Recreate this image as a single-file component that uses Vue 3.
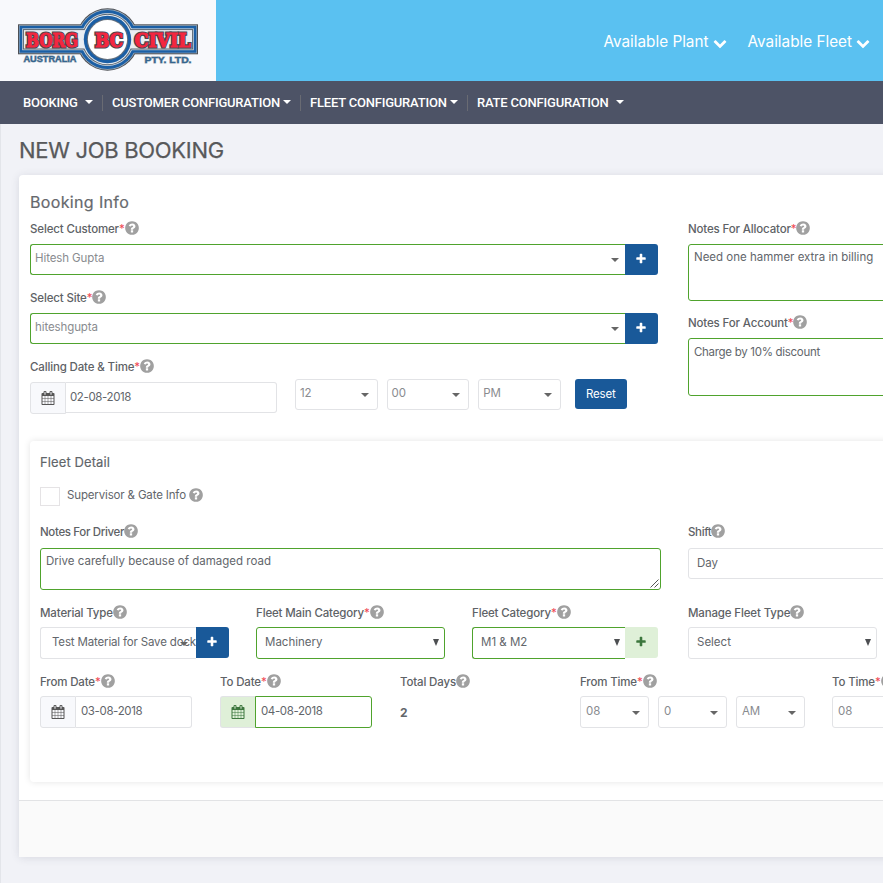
<script setup>
const menu = [
  { label: 'BOOKING', cls: 'm1' },
  { label: 'CUSTOMER CONFIGURATION', cls: 'm2' },
  { label: 'FLEET CONFIGURATION', cls: 'm3' },
  { label: 'RATE CONFIGURATION', cls: 'm4' },
]
const parties = [
  { label: 'Select Customer', value: 'Hitesh Gupta' },
  { label: 'Select Site', value: 'hiteshgupta' },
]
const callTime = ['12', '00', 'PM']
const fromTime = ['08', '0', 'AM']
</script>

<template>
  <div class="page">
    <svg class="defs" aria-hidden="true">
      <symbol id="plus" viewBox="0 0 1792 1792"><path d="M1600 736v192q0 40-28 68t-68 28h-416v416q0 40-28 68t-68 28h-192q-40 0-68-28t-28-68v-416h-416q-40 0-68-28t-28-68v-192q0-40 28-68t68-28h416v-416q0-40 28-68t68-28h192q40 0 68 28t28 68v416h416q40 0 68 28t28 68z" /></symbol>
      <symbol id="help" viewBox="0 0 1792 1792"><path d="M1024 1376v-192q0-14-9-23t-23-9h-192q-14 0-23 9t-9 23v192q0 14 9 23t23 9h192q14 0 23-9t9-23zm256-672q0-88-55.5-163t-138.5-116-170-41q-243 0-371 213-15 24 8 42l132 100q7 6 19 6 16 0 25-12 53-68 86-92 34-24 86-24 48 0 85.5 26t37.5 59q0 38-20 61t-68 45q-63 28-115.5 86.5t-52.5 125.5v36q0 14 9 23t23 9h192q14 0 23-9t9-23q0-19 21.5-49.5t54.5-49.5q32-18 49-28.5t46-35 44.5-48 28-60.5 12.5-81zm384 192q0 209-103 385.5t-279.5 279.5-385.5 103-385.5-103-279.5-279.5-103-385.5 103-385.5 279.5-279.5 385.5-103 385.5 103 279.5 279.5 103 385.5z" /></symbol>
      <symbol id="calendar" viewBox="0 0 1792 1792"><path d="M192 1664h288v-288h-288v288zm352 0h320v-288h-320v288zm-352-352h288v-320h-288v320zm352 0h320v-320h-320v320zm-352-384h288v-288h-288v288zm736 736h320v-288h-320v288zm-384-736h320v-288h-320v288zm768 736h288v-288h-288v288zm-384-352h320v-320h-320v320zm-352-864v-288q0-13-9.5-22.5t-22.5-9.5h-64q-13 0-22.5 9.5t-9.5 22.5v288q0 13 9.5 22.5t22.5 9.5h64q13 0 22.5-9.5t9.5-22.5zm736 864h288v-320h-288v320zm-384-384h320v-288h-320v288zm384 0h288v-288h-288v288zm32-480v-288q0-13-9.5-22.5t-22.5-9.5h-64q-13 0-22.5 9.5t-9.5 22.5v288q0 13 9.5 22.5t22.5 9.5h64q13 0 22.5-9.5t9.5-22.5zm384-64v1280q0 52-38 90t-90 38h-1408q-52 0-90-38t-38-90v-1280q0-52 38-90t90-38h128v-96q0-66 47-113t113-47h64q66 0 113 47t47 113v96h384v-96q0-66 47-113t113-47h64q66 0 113 47t47 113v96h128q52 0 90 38t38 90z" /></symbol>
      <symbol id="chevron" viewBox="0 0 1792 1792"><path d="M1683 808l-742 741q-19 19-45 19t-45-19l-742-741q-19-19-19-45.5t19-45.5l166-165q19-19 45-19t45 19l531 531 531-531q19-19 45-19t45 19l166 165q19 19 19 45.5t-19 45.5z" /></symbol>
    </svg>

    <header class="top">
      <div class="brand">
        <svg width="216" height="81" viewBox="0 0 216 81">
          <g fill="#4d5055"><rect x="18" y="24.3" width="180" height="30" /><circle cx="107.5" cy="39.5" r="31.2" /></g>
          <g fill="#9fb0c0"><rect x="19" y="25.3" width="178" height="28" /><circle cx="107.5" cy="39.5" r="30.2" /></g>
          <g fill="#1b5fa5"><rect x="19.6" y="25.9" width="176.8" height="26.8" /><circle cx="107.5" cy="39.5" r="29.5" /></g>
          <g fill="#cfd9e2"><rect x="22.2" y="28.4" width="171.6" height="21.8" /><circle cx="107.5" cy="39.5" r="26.6" /></g>
          <g fill="#596470"><rect x="22.9" y="29.1" width="170.2" height="20.4" /><circle cx="107.5" cy="39.5" r="25.8" /></g>
          <rect x="23.9" y="30.1" width="168.2" height="18.4" fill="#e9eef3" />
          <circle cx="107.5" cy="39.5" r="24.8" fill="#e4eaf0" />
          <circle cx="107.5" cy="39.5" r="23.7" fill="#1b5fa5" />
          <circle cx="107.5" cy="39.5" r="20.6" fill="#66717d" />
          <circle cx="107.5" cy="39.5" r="19.6" fill="#fff" />
          <g v-for="layer in ['slab edge', 'slab face']" :key="layer" :class="layer">
            <text x="26" y="46.500" textLength="52" lengthAdjust="spacingAndGlyphs">BORG</text>
            <text x="95" y="46.500" textLength="28" lengthAdjust="spacingAndGlyphs">BC</text>
            <text x="134.500" y="46.500" textLength="56" lengthAdjust="spacingAndGlyphs">CIVIL</text>
          </g>
          <g class="small">
            <text x="23.500" y="62" textLength="53" lengthAdjust="spacingAndGlyphs">AUSTRALIA</text>
            <text x="144.500" y="62.500" textLength="47" lengthAdjust="spacingAndGlyphs">PTY. LTD.</text>
          </g>
        </svg>
      </div>
      <div class="links">
        <a>Available Plant<svg><use href="#chevron" /></svg></a>
        <a>Available Fleet<svg><use href="#chevron" /></svg></a>
      </div>
    </header>

    <nav class="nav">
      <div v-for="m in menu" :key="m.label" class="item" :class="m.cls"><span>{{ m.label }}</span><i class="caret" /></div>
    </nav>

    <main class="main">
      <h1>NEW JOB BOOKING</h1>
      <section class="card">
        <div class="body">
          <h2>Booking Info</h2>
          <div class="booking">
            <div class="left">
              <div v-for="p in parties" :key="p.label" class="party">
                <div class="label"><span>{{ p.label }}</span><b>*</b><svg><use href="#help" /></svg></div>
                <div class="group">
                  <div class="control combo ok joined"><span>{{ p.value }}</span><i class="caret" /></div>
                  <button class="add"><svg><use href="#plus" /></svg></button>
                </div>
              </div>
              <div class="label"><span>Calling Date &amp; Time</span><b>*</b><svg><use href="#help" /></svg></div>
              <div class="calling">
                <div class="date wide"><div class="addon"><svg><use href="#calendar" /></svg></div><div class="control">02-08-2018</div></div>
                <div class="times">
                  <div v-for="t in callTime" :key="t" class="control combo"><span>{{ t }}</span><i class="caret" /></div>
                </div>
                <button class="reset">Reset</button>
              </div>
            </div>
            <div class="right">
              <div class="label"><span>Notes For Allocator</span><b>*</b><svg><use href="#help" /></svg></div>
              <div class="control area ok">Need one hammer extra in billing</div>
              <div class="label second"><span>Notes For Account</span><b>*</b><svg><use href="#help" /></svg></div>
              <div class="control area ok tight">Charge by 10% discount</div>
            </div>
          </div>

          <section class="fleet">
            <h3>Fleet Detail</h3>
            <div class="check"><i class="box" /><span>Supervisor &amp; Gate Info</span><svg><use href="#help" /></svg></div>

            <div class="row notes">
              <div>
                <div class="label"><span>Notes For Driver</span><svg><use href="#help" /></svg></div>
                <div class="control driver ok">Drive carefully because of damaged road
                  <svg class="grip" viewBox="0 0 9 9"><path d="M.5 8.500L8.500.5M4.500 8.500l4-4" /></svg>
                </div>
              </div>
              <div>
                <div class="label"><span>Shift</span><svg><use href="#help" /></svg></div>
                <div class="control select shift">Day</div>
              </div>
            </div>

            <div class="row kinds">
              <div>
                <div class="label"><span>Material Type</span><svg><use href="#help" /></svg></div>
                <div class="group">
                  <div class="control material joined"><span>Test Material for Save dock</span><i class="caret" /></div>
                  <button class="add"><svg><use href="#plus" /></svg></button>
                </div>
              </div>
              <div>
                <div class="label"><span>Fleet Main Category</span><b>*</b><svg><use href="#help" /></svg></div>
                <div class="control select ok"><span>Machinery</span><i class="arrow" /></div>
              </div>
              <div>
                <div class="label"><span>Fleet Category</span><b>*</b><svg><use href="#help" /></svg></div>
                <div class="group">
                  <div class="control select ok joined"><span>M1 &amp; M2</span><i class="arrow" /></div>
                  <button class="add soft"><svg><use href="#plus" /></svg></button>
                </div>
              </div>
              <div>
                <div class="label"><span>Manage Fleet Type</span><svg><use href="#help" /></svg></div>
                <div class="control select"><span>Select</span><i class="arrow" /></div>
              </div>
            </div>

            <div class="row period">
              <div>
                <div class="label"><span>From Date</span><b>*</b><svg><use href="#help" /></svg></div>
                <div class="date"><div class="addon"><svg><use href="#calendar" /></svg></div><div class="control">03-08-2018</div></div>
              </div>
              <div>
                <div class="label"><span>To Date</span><b>*</b><svg><use href="#help" /></svg></div>
                <div class="date valid"><div class="addon"><svg><use href="#calendar" /></svg></div><div class="control ok">04-08-2018</div></div>
              </div>
              <div>
                <div class="label"><span>Total Days</span><svg><use href="#help" /></svg></div>
                <div class="days">2</div>
              </div>
              <div>
                <div class="label"><span>From Time</span><b>*</b><svg><use href="#help" /></svg></div>
                <div class="times"><div v-for="t in fromTime" :key="t" class="control combo"><span>{{ t }}</span><i class="caret" /></div></div>
              </div>
              <div>
                <div class="label"><span>To Time</span><b>*</b><svg><use href="#help" /></svg></div>
                <div class="times"><div class="control combo"><span>08</span><i class="caret" /></div></div>
              </div>
            </div>
          </section>
        </div>
        <footer class="foot" />
      </section>
    </main>
  </div>
</template>

<style>
html, body { overflow: hidden; background: #f1f2f7; }
</style>

<style scoped>
* { box-sizing: border-box; }
.page { height: 883px; overflow: hidden; display: flex; flex-direction: column; font-family: Inter, "Liberation Sans", sans-serif; font-size: 11.5px; color: #62666b; background: #f1f2f7; }
.defs { position: absolute; width: 0; height: 0; }
svg { fill: currentColor; flex: none; }
.top { height: 81px; flex: none; display: flex; align-items: flex-start; justify-content: space-between; background: #5ac1f1; }
.brand { width: 216px; background: #f8f9fc; }
.brand svg { display: block; }
.slab { font: bold 18px "DejaVu Serif", serif; }
.edge { fill: #3d3a42; stroke: #4a474f; stroke-width: 3.2px; }
.face { fill: #f5263f; stroke: #f5263f; stroke-width: .9px; }
.small { font: bold 9px "Liberation Sans", sans-serif; fill: #34658f; stroke: #8fa0ae; stroke-width: .8px; paint-order: stroke; }
.links { display: flex; gap: 21px; padding: 32px 13px 0 0; color: #fff; font-size: 15.3px; line-height: 20px; }
.links a { display: flex; align-items: center; white-space: nowrap; }
.links svg { width: 14px; height: 14px; margin: 2px 0 0 4px; }
.nav { height: 43px; flex: none; display: flex; align-items: center; background: #4d5366; color: #fff; font: 500 13px/16px Roboto, "Liberation Sans", sans-serif; letter-spacing: -.2px; padding-left: 14px; }
.item { height: 16px; display: flex; align-items: center; padding-left: 9px; border-right: 1px solid #696b73; white-space: nowrap; }
.item .caret { margin-left: auto; color: #fff; border-width: 4px 4px 0; margin-bottom: 2px; }
.m1 { width: 89px; padding-right: 9px; }
.m2 { width: 198px; padding-right: 9px; }
.m3 { width: 167px; padding-right: 9px; }
.m4 { width: 156px; padding-right: 0; border: 0; }
.caret { width: 0; height: 0; flex: none; border: solid transparent; border-width: 4px 4px 0; border-top-color: currentColor; color: #666; }
.main { flex: 1; padding-left: 18px; border-left: 1px solid #e3e5ea; }
h1, h2, h3 { margin: 0; white-space: nowrap; }
h1 { height: 51px; padding-top: 13px; font-size: 22px; line-height: 27px; letter-spacing: -.3px; color: #58595b; font-weight: 400; -webkit-text-stroke: .25px; }
.card { width: 1050px; height: 682px; border-radius: 4px; background: #fff; box-shadow: 0 1px 8px rgba(50, 55, 80, .13); display: flex; flex-direction: column; }
.body { flex: 1; padding: 16px 11px 0; }
h2 { font-size: 16px; line-height: 23px; letter-spacing: .35px; color: #66696d; font-weight: 400; -webkit-text-stroke: .2px; }
.booking { display: flex; gap: 30px; height: 227px; }
.left { width: 628px; }
.right { flex: 1; }
.label { height: 30px; padding-bottom: 1px; display: flex; align-items: center; white-space: nowrap; font-weight: 500; letter-spacing: -.15px; color: #5e6266; }
.label b { color: #f04b55; font-weight: 400; }
.label svg { width: 16px; height: 16px; margin: -2px 0 0 -1px; color: #a0a0a0; }
.control { height: 31px; border: 1px solid #e2e3e6; border-radius: 3px; background: #fff; white-space: nowrap; }
.ok { border-color: #4fa32d; }
.party { height: 69px; }
.joined { border-top-right-radius: 0; border-bottom-right-radius: 0; border-right: 0; }
.group { display: flex; }
.group .control { flex: 1; min-width: 0; }
.combo { display: flex; justify-content: space-between; padding: 0 6px 3px 4px; align-items: center; color: #898b8f; letter-spacing: -.1px; }
.combo .caret { margin-top: 4px; }
.add { width: 33px; height: 31px; flex: none; border: 0; padding: 0; display: grid; place-items: center; border-radius: 0 3px 3px 0; background: #195999; color: #fff; }
.add svg { width: 12px; height: 12px; margin: 0 2px 1px 0; }
.soft { background: #dff0d8; color: #3c763d; }
.calling { display: flex; align-items: flex-start; margin-top: -1px; }
.date { display: flex; width: 152px; letter-spacing: -.38px; }
.date .control { flex: 1; height: 32px; border-left: 0; border-radius: 0 3px 3px 0; padding: 0 5px; line-height: 29px; }
.date .addon { width: 36px; height: 32px; border: 1px solid #e2e3e6; border-radius: 3px 0 0 3px; background: #f8f9fc; display: grid; place-items: center; color: #555; }
.addon svg { width: 14px; height: 14px; }
.date.wide { width: 247px; padding-top: 1px; }
.date.wide .control { height: 31px; padding-left: 4px; }
.date.valid .addon { width: 35px; background: #dff0d8; color: #3c763d; border-right: 0; }
.date.valid .control { border-left: 1px solid #4fa32d; }
.times { display: flex; gap: 9px; }
.calling .times { margin: -2px 0 0 18px; }
.calling .combo { width: 82.6px; padding-right: 8px; }
.reset { width: 52px; height: 30px; margin: -2px 0 0 14px; padding: 0 0 1px; border: 0; border-radius: 3px; background: #195999; color: #fff; font: inherit; letter-spacing: -.15px; }
.area { height: 57px; padding: 5px; line-height: 15px; }
.second { height: 37px; padding-top: 8px; }
.tight { height: 58px; padding-top: 6px; letter-spacing: -.3px; }
.fleet { height: 341px; width: 1000px; border-radius: 4px; padding: 11px 10px 0; box-shadow: 0 0 7px rgba(0, 0, 0, .11); }
h3 { font-size: 13px; line-height: 21px; font-weight: 400; letter-spacing: .1px; color: #606469; -webkit-text-stroke: .15px; }
.check { height: 48px; padding-top: 14px; display: flex; align-items: flex-start; line-height: 17px; letter-spacing: -.15px; }
.box { width: 20px; height: 19px; border: 1px solid #e5e3e5; margin-right: 7px; }
.check svg { width: 16px; height: 16px; color: #a0a0a0; margin-left: 2px; }
.row { display: flex; }
.row .label { height: 29px; padding-bottom: 0; }
.notes { height: 79px; gap: 27px; margin-top: -2px; }
.row.notes .label { padding-bottom: 3px; letter-spacing: -.35px; }
.driver { width: 621px; height: 42px; padding: 4px 5px; line-height: 16px; position: relative; }
.grip { position: absolute; right: 1px; bottom: 1px; width: 9px; height: 9px; fill: none; stroke: #555; stroke-width: 1; }
.select { display: flex; align-items: center; justify-content: space-between; padding: 0 5px 2px 8px; }
.shift { width: 300px; }
.arrow { border: solid transparent; border-width: 7px 3.5px 0; border-top-color: #4d4f52; }
.kinds { gap: 27px; height: 69px; }
.kinds > div { width: 189px; }
.kinds > div:nth-child(3) { width: 186px; margin-right: 3px; }
.kinds .control { height: 32px; }
.material { display: flex; align-items: center; padding-left: 11px; padding-bottom: 2px; position: relative; letter-spacing: -.16px; }
.material .caret { position: absolute; right: 8px; top: 14px; }
.period { gap: 28px; }
.period > div { width: 152px; flex: none; }
.period > div:nth-child(4) { width: 224px; }
.period .combo { width: 69px; height: 32px; flex: none; padding-left: 5px; }
.period .combo .caret { margin-right: 2px; }
.days { padding-top: 8px; font-weight: 700; font-size: 12px; line-height: 18px; }
.foot { height: 57px; border-top: 1px solid #e2e3e5; background: #fafafa; }
</style>
